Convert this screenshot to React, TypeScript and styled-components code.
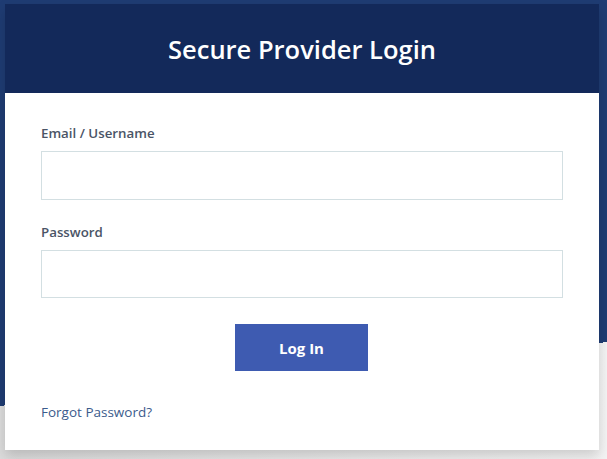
import React from "react";
import styled, { createGlobalStyle } from "styled-components";

const GlobalStyle = createGlobalStyle`
  html, body { margin: 0; padding: 0; }
  body { font-family: "Open Sans", "Noto Sans", Arial, sans-serif; }
  * { box-sizing: border-box; }
`;

const Page = styled.div`
  min-height: 459px;
  padding: 4px 8px 9px 5px;
  background:
    linear-gradient(174deg, #1f3c73 0 403.7px, transparent 403.7px),
    linear-gradient(90deg, #dcdcdc 0%, #f4f4f4 100%);
`;

const Card = styled.div`
  background: #ffffff;
  box-shadow: 0 6px 12px rgba(0, 0, 0, 0.16);
`;

const Header = styled.div`
  height: 89px;
  background: #13295a;
  display: flex;
  align-items: center;
  justify-content: center;
`;

const Title = styled.h1`
  margin: 0;
  color: #ffffff;
  font-size: 25.5px;
  font-weight: 600;
  letter-spacing: 0;
`;

const Body = styled.form`
  padding: 31px 36px 29px 36px;
  display: flex;
  flex-direction: column;
`;

const Field = styled.div`
  display: flex;
  flex-direction: column;
  margin-bottom: ${(p: { $last?: boolean }) => (p.$last ? "26px" : "23px")};
`;

const Label = styled.label`
  font-size: 13.3px;
  line-height: 18px;
  font-weight: 600;
  color: #4a5466;
  margin-bottom: 9px;
`;

const Input = styled.input<{ $h: number }>`
  height: ${(p) => p.$h}px;
  border: 1px solid #d3dfe2;
  background: #ffffff;
  padding: 0 12px;
  font-size: 14px;
  outline: none;
`;

const ButtonRow = styled.div`
  display: flex;
  justify-content: center;
  margin-bottom: 32px;
  padding-right: 1px;
`;

const Button = styled.button`
  width: 133px;
  height: 47px;
  border: none;
  background: #3e5bb1;
  color: #ffffff;
  font-family: inherit;
  font-size: 15px;
  font-weight: 700;
  cursor: pointer;
`;

const Forgot = styled.a`
  font-size: 13.5px;
  line-height: 18px;
  color: #3b5b8c;
  text-decoration: none;
`;

export default function App() {
  return (
    <>
      <GlobalStyle />
      <Page>
        <Card>
          <Header>
            <Title>Secure Provider Login</Title>
          </Header>
          <Body onSubmit={(e) => e.preventDefault()}>
            <Field>
              <Label htmlFor="email">Email / Username</Label>
              <Input id="email" type="text" $h={49} />
            </Field>
            <Field $last>
              <Label htmlFor="password">Password</Label>
              <Input id="password" type="password" $h={48} />
            </Field>
            <ButtonRow>
              <Button type="submit">Log In</Button>
            </ButtonRow>
            <Forgot href="#">Forgot Password?</Forgot>
          </Body>
        </Card>
      </Page>
    </>
  );
}
